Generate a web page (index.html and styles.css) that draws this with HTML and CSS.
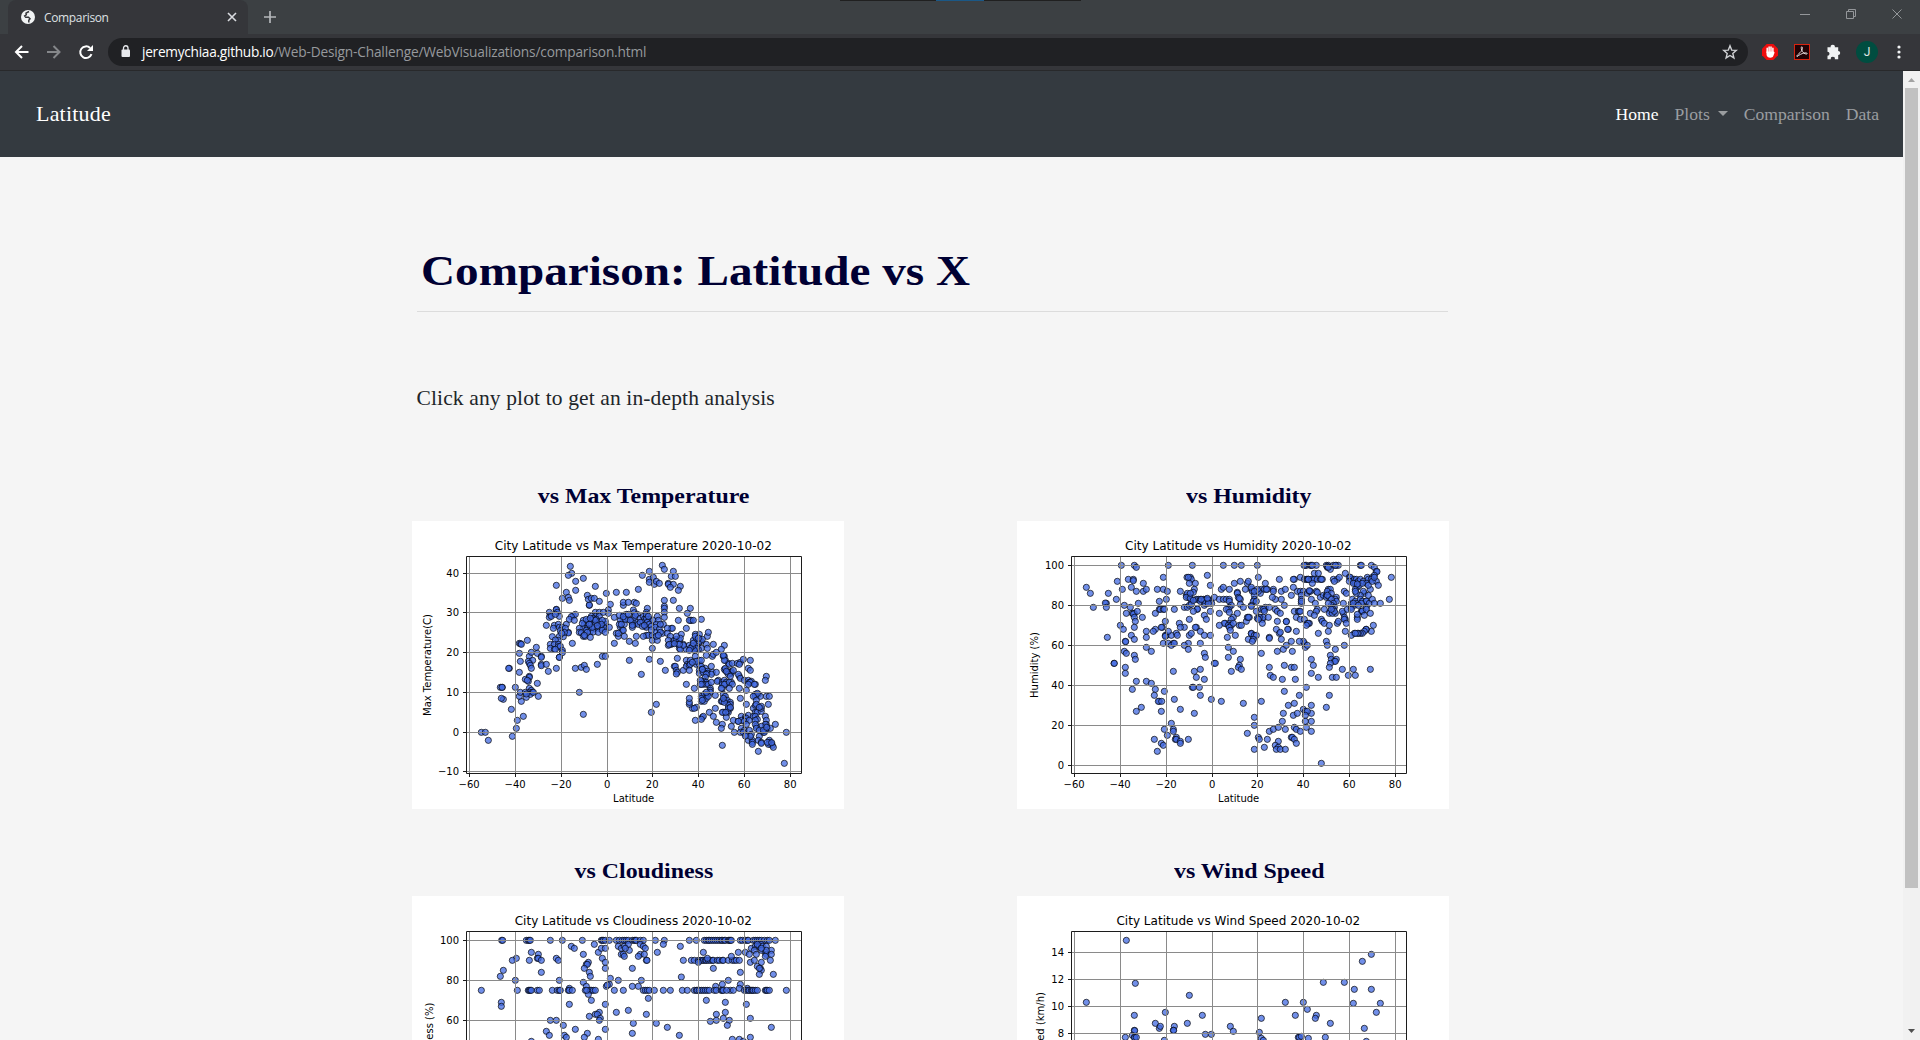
FILE: index.html
```html
<!DOCTYPE html>
<html lang="en">
<head>
<meta charset="utf-8">
<title>Comparison</title>
<link rel="stylesheet" href="styles.css">
</head>
<body>
<div class="browser">
  <div class="tabstrip">
    <div class="tab">
      <svg class="favicon" width="14" height="14" viewBox="0 0 14 14"><circle cx="7" cy="7" r="7" fill="#f1f3f4"/><path d="M8 1.500 5 3.200l.3 1.600L3.700 6l1 1.300h2.800l1.500 1.500-1.200 1.400v2.200" fill="none" stroke="#35363a" stroke-width="1.500"/></svg>
      <span class="tab-title">Comparison</span>
      <svg class="tab-close" width="10" height="10" viewBox="0 0 10 10"><path d="M1 1l8 8M9 1 1 9" stroke="#dadce0" stroke-width="1.6"/></svg>
    </div>
    <svg class="new-tab" width="12" height="12" viewBox="0 0 12 12"><path d="M6 0v12M0 6h12" stroke="#b4b7ba" stroke-width="1.7"/></svg>
    <div class="top-strip"><i></i></div>
    <svg class="window-controls" width="104" height="12" viewBox="0 0 104 12" fill="none" stroke="#94979a"><path d="M0 6.5h10M46.500 3.500h7v7h-7zM48.500 3v-1.500h7v7h-1.500M92.500 1.500l9 9M101.500 1.500l-9 9"/></svg>
  </div>
  <div class="toolbar">
    <svg class="nav-icons" width="80" height="16" viewBox="0 0 80 16" fill="none" stroke-width="2">
      <path d="M14.500 8H2M8 2 2 8l6 6" stroke="#fff"/>
      <path d="M33 8h12.500M39.500 2l6 6-6 6" stroke="#85878a"/>
      <path d="M77.500 10.200a5.800 5.800 0 1 1-1.400-6.200" stroke="#fff"/><path d="M79 1v6h-6z" fill="#fff"/>
    </svg>
    <div class="omnibox">
      <svg width="10" height="13" viewBox="0 0 10 13"><rect x=".5" y="4.500" width="8.500" height="7.500" rx="1" fill="#e8eaed"/><path d="M2.500 5V3a2.250 2.250 0 0 1 4.500 0v2" fill="none" stroke="#e8eaed" stroke-width="1.300"/></svg>
      <span class="url"><b>jeremychiaa.github.io</b>/Web-Design-Challenge/WebVisualizations/comparison.html</span>
      <svg class="star" width="16" height="16" viewBox="0 0 16 16"><path d="M8 1.800l1.700 4.300 4.600.3-3.500 3 1.100 4.500L8 11.500l-3.900 2.400 1.100-4.500-3.500-3 4.600-.3z" fill="none" stroke="#cfd1d4" stroke-width="1.400"/></svg>
    </div>
    <div class="extensions">
      <svg width="16" height="16" viewBox="0 0 16 16"><path d="M4.700 0h6.600L16 4.700v6.600L11.300 16H4.700L0 11.300V4.700z" fill="#ed0d0d"/><path d="M5.200 8.500V4.300M7.100 7.500V3M9 7.500V3M10.900 9V4.200" stroke="#fff" stroke-width="1.500" stroke-linecap="round"/><path d="M4.500 7.500h7.100l.6 1 .8-1-1.600 4.300c-.6 1.400-1.400 1.900-3 1.900-2.400 0-3.900-1.400-3.900-3.500z" fill="#fff"/></svg>
      <svg width="16" height="16" viewBox="0 0 16 16"><rect x=".5" y=".5" width="15" height="15" fill="#210306" stroke="#d9230f"/><path d="M3 12.600c-1-1.200 3-3.400 4.500-5.600 1-1.800 1.300-4.200.3-4.200s-.6 3 .9 5.100c1.400 2 4.500 2.800 4.500 1.600S8 8.600 3 12.600z" fill="none" stroke="#e8dede"/></svg>
      <svg width="16" height="16" viewBox="0 0 16 16"><path d="M1.500 3.300h3.200a2.100 2.100 0 1 1 4.100 0h3.400v3.600a2 2 0 1 1 0 4v4.300H8.800a2 2 0 1 0-3.900 0H1.500v-3.500a2 2 0 1 0 0-4z" fill="#f1f3f4"/></svg>
      <span class="avatar">J</span>
      <svg width="4" height="14" viewBox="0 0 4 14" fill="#f1f3f4"><circle cx="2" cy="2" r="1.600"/><circle cx="2" cy="7" r="1.600"/><circle cx="2" cy="12" r="1.600"/></svg>
    </div>
  </div>
  <div class="viewport">
    <div class="page">
      <nav class="navbar">
        <a class="brand">Latitude</a>
        <div class="links"><a class="active">Home</a><a class="drop">Plots</a><a class="comp">Comparison</a><a>Data</a></div>
      </nav>
      <main class="content">
        <h1><span>Comparison: Latitude vs X</span></h1>
        <p class="lead">Click any plot to get an in-depth analysis</p>
        <div class="plots">
          <section><h2><span>vs Max Temperature</span></h2><svg class="plot" id="temperature" viewBox="6 33 1296 864"></svg></section>
          <section><h2><span>vs Humidity</span></h2><svg class="plot" id="humidity" viewBox="6 33 1296 864"></svg></section>
          <section><h2><span>vs Cloudiness</span></h2><svg class="plot" id="cloudiness" viewBox="6 33 1296 864"></svg></section>
          <section><h2><span>vs Wind Speed</span></h2><svg class="plot" id="wind" viewBox="6 33 1296 864"></svg></section>
        </div>
      </main>
    </div>
    <div class="scrollbar">
      <svg width="17" height="17" viewBox="0 0 17 17"><path d="M5 11h7L8.500 7z" fill="#a3a3a3"/></svg>
      <div class="thumb"></div>
      <svg class="down" width="17" height="17" viewBox="0 0 17 17"><path d="M5 6h7l-3.500 4z" fill="#505050"/></svg>
    </div>
  </div>
</div>
<script src="plots.js"></script>
</body>
</html>
```
FILE: styles.css
```css
* { box-sizing: border-box; }
body { margin: 0; height: 1040px; overflow: hidden; background: #f5f5f5; font-family: Georgia, "Liberation Serif", serif; }
svg { display: block; flex: none; }
.browser { display: flex; flex-direction: column; height: 1040px; }
.tabstrip { position: relative; display: flex; align-items: center; height: 34px; padding-left: 8px; background: #3c4043; flex: none; }
.tab { display: flex; align-items: center; width: 240px; height: 34px; padding: 0 11px 0 13px; background: #35363a; border-radius: 8px 8px 0 0; font: 12px "Open Sans", sans-serif; color: #dfe1e4; }
.tab-title { margin-left: 9px; letter-spacing: -.35px; }
.tab-close { margin-left: auto; }
.new-tab { margin-left: 16px; }
.top-strip { position: absolute; left: 840px; top: 0; width: 241px; height: 1px; background: #202020; }
.top-strip i { display: block; width: 48px; height: 1px; margin-left: 96px; background: #1b5886; }
.window-controls { margin: -6px 16px 0 auto; }
.toolbar { display: flex; align-items: center; height: 37px; padding: 0 0 1px 14px; background: #35363a; border-bottom: 1px solid #28292b; flex: none; }
.nav-icons { margin-right: 14px; }
.omnibox { display: flex; align-items: center; width: 1640px; height: 28px; padding: 0 10px 0 13px; border-radius: 14px; background: #202124; }
.url { margin-left: 11px; font: 13.7px "Open Sans", sans-serif; color: #96999d; letter-spacing: -.18px; white-space: nowrap; }
.url b { font-weight: 400; color: #fff; letter-spacing: -.28px; }
.star { margin-left: auto; }
.extensions { display: flex; align-items: center; gap: 16px; margin-left: 14px; }
.avatar { display: block; width: 22px; height: 22px; margin: 0 3px 0 -2px; border-radius: 50%; background: #004d40; color: #e0e6e4; font: 12px/22px Roboto, sans-serif; text-align: center; }
.viewport { display: flex; flex: 1; min-height: 0; }
.page { width: 1903px; overflow: hidden; }
.navbar { display: flex; align-items: center; justify-content: space-between; height: 86px; padding: 0 24px 0 36px; background: #343a40; color: #fff; }
.brand { font-size: 22px; letter-spacing: .2px; }
.links { display: flex; align-items: center; gap: 16px; font-size: 17.6px; color: #9a9da0; }
.active { color: #fff; }
.drop::after { content: ""; display: inline-block; margin-left: 8px; vertical-align: 4px; border: 5px solid transparent; border-top-color: currentColor; border-bottom: 0; }
.content { width: 1032px; margin-left: 416.500px; }
h1 { margin: 0; height: 155px; width: 1031px; padding: 88px 0 0 4px; border-bottom: 1px solid #dcdcdc; font-size: 43px; line-height: 52px; color: #000033; white-space: nowrap; }
h1 span { display: inline-block; transform: scaleX(1.097); transform-origin: left; }
.lead { margin: 71px 0 0; font-size: 21.5px; line-height: 30px; color: #212529; letter-spacing: .13px; }
.plots { display: grid; grid-template-columns: 432px 432px; column-gap: 173px; row-gap: 48px; margin: 69px 0 0 -4.500px; }
h2 { margin: 0; height: 39px; padding-left: 32px; text-align: center; font-size: 22px; line-height: 28px; color: #000033; }
h2 span { display: inline-block; transform: scaleX(1.085); }
.plot { width: 432px; height: 288px; background: #fff; font-family: "DejaVu Sans", sans-serif; font-size: 30px; }
.plot .title { font-size: 36px; letter-spacing: .08px; }
.dots circle { fill: royalblue; stroke: #000; stroke-width: 2.7; fill-opacity: .75; stroke-opacity: .75; }
.grid { fill: none; stroke: #8a8a8a; stroke-width: 3; }
.frame { fill: none; stroke: #1c1c1c; stroke-width: 3; }
.scrollbar { display: flex; flex-direction: column; align-items: center; width: 17px; background: #f1f1f1; }
.thumb { width: 13px; height: 800px; background: #c1c1c1; }
.down { margin-top: auto; }
```
FILE: plots.js
```js
// Marker positions are given on a canvas three times the plot's display size.
var temperature = `481,169 485,190 475,196 497,214 520,205 439,226 556,229 497,241 469,247 532,256 457,265 475,262 478,271 589,250 619,247 649,247 685,238 697,196 718,184 718,208 718,217 730,202 733,223 739,214 748,220 757,166 763,178 790,184 784,199 796,199 775,220 775,223 790,223 781,232 811,229 805,241
538,286 538,285 535,268 544,265 553,265 568,274 601,283 595,300 640,286 640,277 655,277 673,277 679,280 763,271 790,271 763,289 763,295 763,307 712,295 709,307 808,295 841,295 832,310 670,300 673,308 763,322 805,331 874,328 841,331 844,331 838,331 850,331 829,355 760,343 784,355 787,355 772,355
439,298 439,299 418,307 421,316 442,307 448,319 418,322 424,319 436,313 409,346 433,346 445,343 430,355 448,352 469,343 475,367 475,369 490,317 496,313 484,320 478,328 493,331 457,352 466,355 451,362 460,380 427,380 448,379 445,391 436,390 421,403 433,403 445,403 421,415 433,418 445,410 451,409 436,418 457,421 457,428 448,442 487,400 463,367 455,370
556,307 568,307 556,319 568,319 544,319 550,328 547,331 520,331 535,331 523,343 535,343 544,343 556,343 568,343 577,343 586,343 520,355 532,355 541,355 553,355 565,355 577,355 586,355 508,355 508,367 514,368 529,361 541,364 550,366 520,379 526,379 541,382 565,367 577,361 598,352 517,340 529,328 550,325 559,328 568,335 586,334 577,331 574,343 595,310 532,367 523,376 547,352 538,343 556,331 541,325 562,347 580,307 586,367
613,322 640,316 649,313 640,328 655,328 631,331 643,343 631,352 637,361 619,370 625,379 640,361 646,328 628,343 634,343 643,379 613,400 658,394 676,400 679,379 625,370 667,343 673,343 667,352 679,337 667,331 673,322 682,313 676,316 691,325 700,319 709,319 718,328 703,328 709,313 709,328 697,337 712,337 706,349 709,352 718,343 724,349 730,331 742,319 745,331 739,343 736,352 748,358 757,370 709,376 715,376 727,376 700,379 736,367 727,391 742,391 727,415 628,316 640,320 655,313 661,331 685,343 691,337 715,319 751,343 751,367 739,379 724,360 745,376 697,349 703,346 667,346
718,448 751,454 658,451 694,493 766,481 739,583 724,607 772,370 781,379 775,391 784,403 775,406 787,400 793,391 799,388 808,391 805,403 814,373 808,415 811,418 820,403 829,418 838,406 850,418 850,391 859,385 868,385 868,373 856,373 874,394 865,400 859,403 868,394 892,379 895,367 874,415 865,418 859,415 853,421 847,409 889,403 910,403 943,406 934,418 841,415 838,421 892,415 877,388 811,385 799,379 856,379 850,400 778,403 820,406 808,403 793,401 865,385
802,445 793,469 796,469 799,481 802,487 799,492 820,481 829,451 832,463 829,469 838,466 841,451 841,463 838,481 856,439 859,463 868,451 868,463 874,469 868,481 859,454 847,457 874,451 829,523 853,535 889,436 907,439 910,433 919,427 940,439 943,439 946,451 904,469 886,475 877,478 868,490 892,484 892,490 907,487 919,487 904,493 880,487 889,493 886,502 883,514 889,517 874,514 880,523 871,523 889,523 877,478 895,523 901,535 871,511 874,523 904,517 925,511 922,514 937,517 937,523 943,511 949,517 946,523 937,535 943,523 934,535 946,481 943,478 946,475 955,460 958,463 967,460 964,484 964,490 961,487 964,517 958,517 967,523 958,535 982,460 991,457 988,463 1000,448 1021,451 1015,475 1021,481 988,499 985,493 991,505 1003,511 1015,511 1018,517 1024,514 1021,517 1015,523 1036,523 1033,523 988,535 1009,541 1069,499 1066,511 943,451 940,436 952,487 970,481 955,493 961,499 949,484
874,574 883,574 880,562 874,559 889,559 883,553 892,553 901,541 901,547 889,565 895,559 916,556 934,574 937,574 943,565 940,553 946,559 946,571 952,571 961,577 961,583 955,586 961,595 955,607 952,604 940,607 937,607 949,622 898,607 910,619 877,622 880,619 874,628 856,631 847,595 859,592 838,583 838,577 838,565 853,595 919,637 937,643 934,655 964,649 970,631 985,634 991,565 1009,583 1030,595 1036,586 1036,607 1042,607 1054,604 1054,595 1054,589 1075,583 1045,553 1051,559 1069,559 1078,559 1036,553 1036,559 1042,550 1030,559 916,595 874,565 943,577 940,565 955,595 961,592 947,607 877,571 889,547 1039,571 1039,583 1048,592
994,619 1006,622 1015,616 1006,628 994,631 985,634 1009,625 1003,634 1018,631 1030,619 1036,619 1042,628 1036,631 1009,643 994,655 1003,661 991,667 973,667 1000,667 1018,661 1024,673 1009,676 1015,691 1027,691 1027,697 1027,703 1048,679 1045,691 1054,697 1054,700 1045,724 1066,619 1069,631 1069,643 1072,655 1081,655 1066,649 1066,643 1060,667 1066,661 1054,649 1039,649 1036,643 1078,691 1078,697 1084,700 1081,703 1087,706 1075,703 1090,712 1096,643 1129,667 1123,760 937,706 1039,655 1048,661 1063,667 1060,661 1070,652 1021,679 1006,678 1072,697 1085,698
214,667 226,667 235,691 307,679 319,655 322,631 340,619 304,598 334,574 328,559 349,562 331,547 316,532 280,568 274,565 271,532 277,532 276,532 298,475 296,475 328,487 331,454 328,430 328,400 332,401 334,403 352,391 379,412 358,439 364,427 355,454 368,451 358,460 361,466 364,475 382,430 394,439 394,442 394,463 394,467 409,463 415,484 439,475 448,442 358,499 358,502 355,514 346,508 352,511 382,520 358,535 364,541 358,547 367,547 385,559 346,547 361,553 370,547 349,552
496,475 514,472 523,466 529,478 562,463 577,439 586,439 508,547 520,613`;

var humidity = `319,166 358,166 364,172 460,166 532,166 625,166 658,166 679,166 727,166 871,166 874,166 886,166 889,166 904,166 934,166 940,166 937,172 955,166 964,166 970,166 946,178 1036,166 1039,166 1069,166 1078,172 1084,184 1086,185 937,169 867,166 892,166 961,166 940,172
214,232 226,250 235,292 280,250 307,214 274,280 271,279 274,292 304,268 322,238 340,208 355,208 355,212 349,232 364,244 385,220 385,244 394,238 427,238 445,238 457,244 445,202 433,274 454,268 370,280 328,286 346,292 334,310 352,310 358,310 355,312 367,304 358,322 361,334 358,352 382,322 316,346 325,358 349,376 358,388 331,394 332,395 328,424 334,430 358,436 361,448 277,382 297,460 298,460 331,472 331,490 352,538 364,514 364,604 379,592 394,514 409,520 394,412 409,424 394,364 394,382
421,310 433,298 436,298 445,298 448,298 478,298 496,244 514,256 516,202 526,202 529,208 523,220 541,220 577,196 586,226 538,238 535,247 517,250 520,262 523,262 529,271 514,262 526,265 544,268 550,268 556,268 565,268 571,268 577,268 586,271 547,298 547,297 535,304 508,292 517,292 523,286 529,283 556,274 568,286 571,280 586,304 568,316 574,328 523,328 493,340 508,352 496,352 451,334 442,352 439,352 421,358 415,364 454,376 451,376 451,379 469,376 484,370 487,376 460,364 523,376 529,370 544,352 541,352 556,364 568,376 586,376 556,400 520,400 508,406 520,418 445,400 460,400 475,400 469,406 478,400 568,430 571,442 598,460 601,460 475,484 538,484 544,502 556,478 568,508 532,532 535,532 553,532 556,556 589,568 538,610 496,598 478,568 448,544 421,538 418,556 433,574 430,574 440,574 439,604 469,640 448,658 457,676 475,658 475,664 484,682 481,688 484,688 496,694 496,700 520,688 418,688 439,700 445,706 427,724 568,271 580,271 590,280 526,250 520,202 535,271 559,268 580,280
577,265 598,262 613,268 625,268 634,268 643,268 643,274 649,286 619,238 625,232 643,238 658,220 676,214 697,220 700,214 691,238 709,238 712,244 730,202 751,220 739,238 748,238 775,238 736,250 667,247 667,250 670,262 676,268 673,265 709,232 718,256 718,268 715,274 709,286 709,289 676,283 685,292 643,292 640,298 634,298 613,310 643,307 655,322 667,310 649,328 643,340 631,340 628,340 613,346 640,346 649,346 643,352 646,361 655,340 673,346 679,346 694,334 697,322 703,322 700,322 724,304 739,298 748,298 751,292 763,292 745,298 748,304 736,322 742,328 745,322 733,322 727,325 742,340 760,322 781,298 787,304 796,310 808,286 799,268 781,268 772,262 799,244 811,238 793,208 775,244 757,238 754,238 730,244 727,238 718,244 724,274 730,328 637,382 661,376 700,388 709,370 709,371 718,376 724,376 715,388 712,394 763,382 763,385 793,370 799,388 784,358 796,367 787,334 814,334 814,335 820,358 818,358 640,412 655,424 640,442 676,448 673,466 670,472 679,478 649,484 739,430 787,424 805,418 814,406 829,394 832,424 763,472 766,496 775,502 802,508 808,466 829,472 838,472 841,508 619,574 685,580 739,574 697,670 718,622 718,646 718,718 730,682 733,688 757,688 748,712 763,664 775,658 790,652 811,658 790,694 781,706 790,712 784,718 796,718 811,718 808,544 820,586 838,580 805,610 802,634 835,616 847,610 838,652 844,658 856,664 829,682 832,682 838,688 844,700 853,556 874,532
838,208 835,208 856,202 847,244 835,232 829,256 856,244 865,244 859,256 859,268 859,280 868,208 874,208 877,208 880,208 889,208 892,208 898,208 907,208 916,208 922,208 898,190 910,190 892,220 919,208 877,250 883,244 886,244 904,244 883,242 889,268 901,280 916,262 925,256 934,256 937,250 934,262 940,238 946,238 937,244 949,250 943,262 955,208 967,208 973,202 958,214 991,190 1003,202 1009,208 1006,202 1012,214 1018,208 1024,208 1021,220 1030,214 1036,208 1045,214 1057,202 1060,208 1072,202 1078,196 1084,214 1090,226 1069,208 1054,220 1027,232 1021,238 1033,226 1042,220 1066,238 1060,226 1048,250 1045,244 1036,256 1024,250 1021,244 988,244 994,250 964,262 961,268 964,274 949,268 955,280 949,286 958,292 940,280 946,304 943,310 955,298 961,310 952,310 958,304 928,298 907,298 904,304 886,310 898,316 838,304 850,304 853,304 856,304 844,322 856,328 868,328 883,340 877,340 880,340 874,346 919,328 922,334 928,340 943,346 967,340 970,334 991,328 985,310 982,304 997,298 988,322 985,280 1009,280 1012,268 1009,292 1018,286 1021,274 1027,280 1036,268 1042,274 1054,274 1054,273 1063,280 1072,268 1078,280 1096,280 1123,268 1129,202 1060,256 1054,292 1039,304 1042,304 1042,303 1048,316 1054,298 1066,310 1027,322 1027,328 1027,313 1075,346 1069,364 1054,358 1053,358 1048,364 1042,370 1036,370 1030,370 1018,370 1009,376 1027,370 1021,370 991,364 988,328 994,340 940,364 910,370 868,400 865,394 853,394 844,364 934,394 937,406 961,418 946,436 949,448 964,448 958,454 961,454 946,460 943,472 952,502 964,502 982,478 1000,496 1021,496 1015,478 1066,478 988,406 871,412 877,406 889,448 895,466 889,490 910,502 943,556 934,592 889,586 889,610 865,598 871,604 877,604 871,616 889,634 871,634 874,652 889,664 919,760 1015,280 1039,280 1030,286 1003,214 1015,220 1027,222 1072,214 1078,202 907,247 880,208 937,256 949,298 1009,298 859,274`;

var cloudiness = `275,166 278,166 349,166 355,166 358,166 361,166 421,166 457,166 517,166 574,166 577,166 580,166 586,166 598,166 619,166 628,166 637,166 643,166 649,166 655,166 667,166 673,166 676,166 679,166 691,166 700,166 736,166 763,166 838,166 859,166 883,166 889,166 895,166 898,166 904,166 910,166 916,166 922,166 928,166 934,166 937,166 943,166 946,166 955,166 958,166 961,166 964,166 991,166 997,166 1006,166 1012,166 1015,166 1030,166 1036,166 1042,166 1048,166 1054,166 1063,166 1072,166 1078,166 1096,166
553,178 484,184 493,190 364,202 385,208 382,220 385,220 394,226 358,226 319,220 307,226 280,256 271,274 316,286 394,262 439,220 445,226 520,208 565,202 574,190 586,190 577,220 586,232 586,250 535,232 529,238 532,238 523,250 538,262 541,274 448,286 625,184 634,190 643,184 655,178 658,196 646,190 634,208 640,208 643,214 691,178 700,184 706,190 691,208 703,208 685,214 709,226 711,226 667,250 760,178 742,202 811,184 814,276 880,202 820,226 844,226 853,226 865,226 871,226 877,226 880,226 886,226 889,226 895,226 901,226 907,226 910,226 922,226 928,226 937,226 940,226 955,226 967,226 973,226 979,226 988,226 865,232 892,220 964,214 910,250 991,262 985,202 1006,202 1018,208 1024,190 1036,184 1042,184 1048,184 1054,178 1057,184 1069,184 1054,196 1042,178 1066,202 1069,208 1084,196 1084,208 1081,226 1066,214 1069,196 1033,196 1039,208 1021,232 1033,226 1042,244 1054,232 1051,250 1054,256 1048,268 1090,268 1054,190 1048,250
520,292 529,304 601,280 598,298 589,304 592,300 625,286 694,286 667,304 685,304 917,304 937,298 955,286 991,298 988,310 1012,310 478,310
214,316 322,316 355,316 358,316 361,316 364,316 382,316 388,316 427,316 442,316 448,316 451,316 475,316 478,316 487,316 526,316 541,316 544,316 550,316 556,316 613,316 640,316 700,316 706,316 712,316 718,316 733,316 760,316 781,316 817,316 832,316 853,316 859,316 862,316 868,316 874,316 880,316 886,316 892,316 898,316 913,316 919,316 934,316 937,316 940,316 961,316 970,316 1003,316 1009,316 1015,316 1018,316 1024,316 1027,316 1030,316 1036,316 1042,316 1066,316 1069,316 1072,316 1078,316 1129,316
274,352 274,364 535,328 544,346 715,340 889,346 946,352 478,358 586,358 1009,358 568,382 619,382 655,376 709,388 538,394 556,388 562,388 571,400 568,406 919,388 946,382 940,400 1021,400 421,406 439,406 901,409 919,406 958,406 952,421 460,421 670,415 739,415 772,427 1084,427 409,439 418,451 463,451 469,457 496,433 586,433 532,445 523,457 667,445 808,451 565,463 967,463 988,463 1000,469 1021,457 364,469 950,316 530,316`;

var wind = `334,166 361,295 214,352 358,391 523,331 451,382 421,415 433,430 436,424 478,424 475,436 476,436 517,415 562,391 571,448 589,448 646,424 655,439 358,436 359,437 352,451 358,457 359,458 364,457 331,457 448,466 733,442 739,400 739,460 745,466 811,352 841,391 865,352 877,373 904,391 901,400 946,415 925,292 988,292 1018,313 1015,355 1042,229 1069,208 1069,313 1096,355 1084,382 1048,430 1054,469 850,457 853,457 859,454 880,460 931,457`;

var xTicks = [[178.5, '−60'], [316.5, '−40'], [454.5, '−20'], [592.5, '0'], [727.5, '20'], [865.5, '40'], [1003.5, '60'], [1141.5, '80']];

function draw(id, title, yLabel, yLabelX, data, yTicks) {
  var s = '<g class="dots">';
  data.trim().split(/\s+/).forEach(function (p) {
    var c = p.split(',');
    s += '<circle cx="' + c[0] + '" cy="' + c[1] + '" r="9.3"/>';
  });
  s += '</g>';
  var grid = '', ticks = '', labels = '';
  xTicks.forEach(function (t) {
    grid += 'M' + t[0] + ' 141V789';
    ticks += 'M' + t[0] + ' 792v9';
    labels += '<text x="' + (t[0] - 1) + '" y="833" text-anchor="middle">' + t[1] + '</text>';
  });
  yTicks.forEach(function (t) {
    grid += 'M171 ' + t[0] + 'H1173';
    ticks += 'M168 ' + t[0] + 'h-9';
    labels += '<text x="147" y="' + (t[0] + 10) + '" text-anchor="end">' + t[1] + '</text>';
  });
  s += '<path class="grid" d="' + grid + '"/><path class="frame" d="' + ticks + 'M169.500 139.500H1174.500V790.500H169.500z"/>' + labels;
  s += '<text x="671" y="875" text-anchor="middle">Latitude</text>';
  s += '<text class="title" x="670" y="120" text-anchor="middle">' + title + '</text>';
  s += '<text transform="translate(' + yLabelX + ' 465) rotate(-90)" text-anchor="middle">' + yLabel + '</text>';
  document.getElementById(id).innerHTML = s;
}

var percent = [[166.5, '100'], [286.5, '80'], [406.5, '60'], [526.5, '40'], [646.5, '20'], [766.5, '0']];
draw('temperature', 'City Latitude vs Max Temperature 2020-10-02', 'Max Temperature(C)', 62, temperature,
  [[190.5, '40'], [307.5, '30'], [427.5, '20'], [547.5, '10'], [667.5, '0'], [784.5, '−10']]);
draw('humidity', 'City Latitude vs Humidity 2020-10-02', 'Humidity (%)', 69, humidity, percent);
draw('cloudiness', 'City Latitude vs Cloudiness 2020-10-02', 'Cloudiness (%)', 69, cloudiness, percent);
draw('wind', 'City Latitude vs Wind Speed 2020-10-02', 'Wind Speed (km/h)', 87, wind,
  [[202.5, '14'], [283.5, '12'], [364.5, '10'], [445.5, '8'], [526.5, '6'], [607.5, '4'], [688.5, '2'], [769.5, '0']]);
```
